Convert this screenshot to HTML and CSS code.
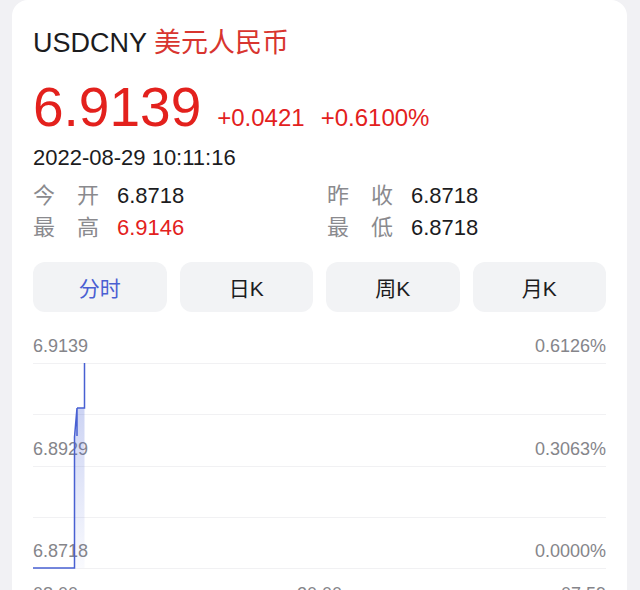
FILE: index.html
```html
<!DOCTYPE html>
<html lang="zh-CN">
<head>
    <meta charset="UTF-8">
    <meta name="viewport" content="width=device-width, initial-scale=1.0">
    <title>USDCNY</title>
    <link rel="stylesheet" href="styles.css">
</head>
<body>
    <div class="card">
        <div class="title">USDCNY <span class="name">美元人民币</span></div>
        <div class="quote">
            <span class="price">6.9139</span>
            <span class="chg">+0.0421</span>
            <span class="chg pct">+0.6100%</span>
        </div>
        <div class="time">2022-08-29 10:11:16</div>
        <div class="stats">
            <span class="label"><i>今</i><i>开</i></span><span class="val">6.8718</span>
            <span class="label"><i>昨</i><i>收</i></span><span class="val">6.8718</span>
            <span class="label"><i>最</i><i>高</i></span><span class="val up">6.9146</span>
            <span class="label"><i>最</i><i>低</i></span><span class="val">6.8718</span>
        </div>
        <div class="tabs">
            <button class="tab active">分时</button>
            <button class="tab">日K</button>
            <button class="tab">周K</button>
            <button class="tab">月K</button>
        </div>
        <div class="chart">
            <svg class="plot" width="573" height="260" viewBox="0 0 573 260">
                <defs>
                    <linearGradient id="fill" x1="0" y1="0" x2="0" y2="1">
                        <stop offset="0" stop-color="#4a63d6" stop-opacity="0.35"/>
                        <stop offset="1" stop-color="#4a63d6" stop-opacity="0.03"/>
                    </linearGradient>
                </defs>
                <g stroke="#f1f1f3" stroke-width="1">
                    <line x1="0" y1="37.5" x2="573" y2="37.5"/>
                    <line x1="0" y1="88.5" x2="573" y2="88.5"/>
                    <line x1="0" y1="140.5" x2="573" y2="140.5"/>
                    <line x1="0" y1="191.5" x2="573" y2="191.5"/>
                    <line x1="0" y1="242.5" x2="573" y2="242.5"/>
                </g>
                <path d="M41.5 242 V111 L44 82 H51.5 V37 V242 Z" fill="url(#fill)"/>
                <path d="M0 242 H41.5 V111 L44 82 V110 M44 82 H51.5 V37" fill="none" stroke="#4860d2" stroke-width="1.5"/>
            </svg>
            <div class="axis-row"><span>6.9139</span><span>0.6126%</span></div>
            <div class="axis-row"><span>6.8929</span><span>0.3063%</span></div>
            <div class="axis-row last"><span>6.8718</span><span>0.0000%</span></div>
            <div class="xaxis"><span>08:00</span><span>20:00</span><span>07:59</span></div>
        </div>
    </div>
</body>
</html>
```

FILE: styles.css
```css
html, body {
    margin: 0;
    height: 590px;
    overflow: hidden;
}
body {
    background-color: #f1f1f4;
    font-family: "Liberation Sans", "Noto Sans CJK SC", sans-serif;
    color: #1c1c1e;
}
.card {
    margin: 0 13px 0 12px;
    padding: 25px 21px 0 21px;
    background-color: #fff;
    border-radius: 16px 16px 0 0;
    min-height: 700px;
}
.title {
    font-size: 27px;
    line-height: 36px;
}
.name {
    color: #d8352f;
}
.quote {
    display: flex;
    align-items: baseline;
    margin-top: 14px;
    color: #e3211d;
}
.price {
    font-size: 55px;
    line-height: 64px;
}
.chg {
    font-size: 24px;
    line-height: 1;
    margin-left: 16px;
}
.chg.pct {
    margin-left: 16px;
}
.time {
    font-size: 22px;
    line-height: 30px;
    margin-top: 4px;
}
.stats {
    display: grid;
    grid-template-columns: 84px 210px 84px auto;
    grid-auto-rows: 32px;
    margin-top: 7px;
    font-size: 22px;
    line-height: 32px;
}
.label {
    display: flex;
    justify-content: space-between;
    width: 66px;
    color: #8a8a8e;
}
.label i {
    font-style: normal;
}
.val.up {
    color: #e3211d;
}
.tabs {
    display: grid;
    grid-template-columns: repeat(4, 1fr);
    grid-gap: 13px;
    margin-top: 18px;
}
.tab {
    height: 50px;
    border: none;
    border-radius: 12px;
    background-color: #f2f3f5;
    font-family: inherit;
    font-size: 21px;
    color: #1c1c1e;
    padding: 0;
}
.tab.active {
    color: #4a5fd2;
}
.chart {
    position: relative;
    margin-top: 14px;
    padding-top: 9px;
    font-size: 18px;
    line-height: 22px;
    color: #85858a;
}
.plot {
    position: absolute;
    top: 0;
    left: 0;
    z-index: 1;
    pointer-events: none;
}
.axis-row {
    display: flex;
    justify-content: space-between;
    height: 102.5px;
}
.axis-row.last {
    height: 22px;
}
.xaxis {
    display: flex;
    justify-content: space-between;
    margin-top: 21px;
}
```
